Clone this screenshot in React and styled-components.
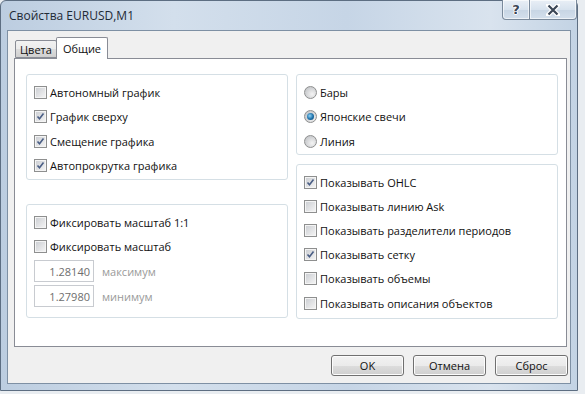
import React from "react";
import styled, { createGlobalStyle } from "styled-components";

const GlobalStyle = createGlobalStyle`
  html, body {
    margin: 0;
    padding: 0;
    background: #e9edf1;
  }
  body {
    font-family: "Open Sans", "Liberation Sans", Arial, sans-serif;
    font-size: 11px;
    color: #111;
  }
`;

const Window = styled.div`
  box-sizing: border-box;
  width: 578px;
  height: 391px;
  display: flex;
  flex-direction: column;
  padding: 0 6px 6px 6px;
  border: 1px solid #5d6e82;
  border-radius: 6px 6px 0 0;
  background: linear-gradient(90deg, #bccde0 0%, #d3dfec 30%, #c6d5e6 60%, #d9e3ee 85%, #c3d3e4 100%);
`;

const TitleBar = styled.div`
  height: 29px;
  display: flex;
  align-items: flex-start;
  justify-content: space-between;
  margin-right: -6px;
`;

const Title = styled.span`
  font-size: 12px;
  line-height: 12px;
  margin-top: 9px;
  margin-left: 2px;
  color: #1e2a36;
`;

const CaptionButtons = styled.div`
  display: flex;
  margin-top: -1px;
`;

const CaptionButton = styled.div`
  box-sizing: border-box;
  width: ${(p) => p.w}px;
  height: 20px;
  display: flex;
  align-items: center;
  justify-content: center;
  border: 1px solid #7a8a9c;
  border-top: none;
  border-left: ${(p) => (p.first ? "1px solid #7a8a9c" : "none")};
  border-radius: ${(p) => (p.first ? "0 0 0 4px" : "0 0 4px 0")};
  background: linear-gradient(180deg, #e9eff6 0%, #d7e2ee 50%, #c7d5e4 51%, #d3dfec 100%);
  box-shadow: inset 0 0 0 1px rgba(255, 255, 255, 0.6);
`;

const HelpGlyph = styled.span`
  font-family: "DejaVu Sans", sans-serif;
  font-weight: bold;
  font-size: 13px;
  color: #3b4656;
  text-shadow: 0 0 1px #fff, 1px 0 0 #fff, -1px 0 0 #fff, 0 1px 0 #fff;
`;

const Client = styled.div`
  flex: 1;
  display: flex;
  flex-direction: column;
  background: #f0f0f0;
  border: 1px solid #7e90a4;
  padding: 6px 2px 0 6px;
`;

const TabStrip = styled.div`
  display: flex;
  align-items: flex-end;
  height: 21px;
  padding-left: 1px;
  position: relative;
  z-index: 1;
`;

const Tab = styled.div`
  box-sizing: border-box;
  height: ${(p) => (p.active ? 22 : 18)}px;
  padding: 0 ${(p) => (p.active ? 6 : 4)}px;
  margin-left: ${(p) => (p.active ? -1 : 0)}px;
  display: flex;
  align-items: center;
  border: 1px solid #898c95;
  border-bottom: ${(p) => (p.active ? "none" : "1px solid #898c95")};
  border-radius: 2px 2px 0 0;
  background: ${(p) =>
    p.active ? "#fff" : "linear-gradient(180deg, #f2f2f2 0%, #ebebeb 50%, #dddddd 51%, #cfcfcf 100%)"};
  margin-bottom: ${(p) => (p.active ? -1 : 0)}px;
`;

const Panel = styled.div`
  box-sizing: border-box;
  height: 289px;
  margin-right: 1px;
  background: #fff;
  border: 1px solid #898c95;
  padding: 15px 8px 0 11px;
  display: grid;
  grid-template-columns: 262px 262px;
  column-gap: 8px;
  align-items: start;
`;

const Column = styled.div`
  display: flex;
  flex-direction: column;
  gap: ${(p) => p.gap}px;
`;

const Group = styled.div`
  box-sizing: border-box;
  height: ${(p) => p.h}px;
  border: 1px solid #d5dfe5;
  border-radius: 3px;
  padding: ${(p) => p.pt}px 6px 0 7px;
`;

const Row = styled.div`
  display: flex;
  align-items: center;
  height: ${(p) => p.h || 24}px;
  gap: 3px;
  white-space: nowrap;
`;

const Box = styled.span`
  box-sizing: border-box;
  width: 13px;
  height: 13px;
  flex: none;
  display: flex;
  align-items: center;
  justify-content: center;
  border: 1px solid #8e8f8f;
  background: linear-gradient(135deg, #c9ccd1 0%, #e2e3e5 55%, #f6f6f6 100%);
  box-shadow: inset 0 0 0 1px #f4f4f4;
`;

const Radio = styled.span`
  box-sizing: border-box;
  width: 13px;
  height: 13px;
  flex: none;
  border-radius: 50%;
  border: 1px solid #8e8f8f;
  background: radial-gradient(circle at 65% 65%, #f4f4f4 0%, #d6d7d9 50%, #b9bcc0 100%);
  display: flex;
  align-items: center;
  justify-content: center;
  &::after {
    content: "";
    display: ${(p) => (p.checked ? "block" : "none")};
    width: 7px;
    height: 7px;
    border-radius: 50%;
    background: radial-gradient(circle at 40% 40%, #8fd3f7 0%, #1c6fa8 55%, #0b3f6b 100%);
  }
`;

const NumInput = styled.div`
  box-sizing: border-box;
  width: 60px;
  height: 22px;
  border: 1px solid #c8cbd0;
  background: #fff;
  color: #6d6d6d;
  display: flex;
  align-items: center;
  justify-content: flex-end;
  padding-right: 3px;
`;

const Dim = styled.span`
  color: #9a9a9a;
  margin-left: 5px;
`;

const Footer = styled.div`
  display: flex;
  justify-content: flex-end;
  gap: 9px;
  margin-top: 8px;
`;

const Button = styled.div`
  box-sizing: border-box;
  width: 73px;
  height: 21px;
  display: flex;
  align-items: center;
  justify-content: center;
  border: 1px solid #707070;
  border-radius: 3px;
  background: linear-gradient(180deg, #f2f2f2 0%, #ebebeb 50%, #dddddd 51%, #cfcfcf 100%);
  box-shadow: inset 0 0 0 1px #fcfcfc;
`;

const Check = ({ on }) => (
  <Box>
    {on && (
      <svg width="9" height="9" viewBox="0 0 9 9">
        <path d="M1.5 4.5 L3.5 6.8 L7.5 1.5" fill="none" stroke="#4a5e85" strokeWidth="1.6" />
      </svg>
    )}
  </Box>
);

const CheckRow = ({ on, label, h }) => (
  <Row h={h}>
    <Check on={on} />
    <span>{label}</span>
  </Row>
);

const CloseGlyph = () => (
  <svg width="14" height="12" viewBox="0 0 14 12">
    <path d="M2 1 L12 11 M12 1 L2 11" stroke="#fff" strokeWidth="4.5" strokeLinecap="round" />
    <path d="M2.5 1.5 L11.5 10.5 M11.5 1.5 L2.5 10.5" stroke="#3b4656" strokeWidth="2.2" />
  </svg>
);

export default function App() {
  return (
    <>
      <GlobalStyle />
      <Window>
        <TitleBar>
          <Title>Свойства EURUSD,M1</Title>
          <CaptionButtons>
            <CaptionButton w={28} first>
              <HelpGlyph>?</HelpGlyph>
            </CaptionButton>
            <CaptionButton w={47}>
              <CloseGlyph />
            </CaptionButton>
          </CaptionButtons>
        </TitleBar>
        <Client>
          <TabStrip>
            <Tab>Цвета</Tab>
            <Tab active>Общие</Tab>
          </TabStrip>
          <Panel>
            <Column gap={24}>
              <Group h={106} pt={5}>
                <CheckRow h={24.5} label="Автономный график" />
                <CheckRow h={24.5} on label="График сверху" />
                <CheckRow h={24.5} on label="Смещение графика" />
                <CheckRow h={24.5} on label="Автопрокрутка графика" />
              </Group>
              <Group h={114} pt={5}>
                <CheckRow label="Фиксировать масштаб 1:1" />
                <CheckRow label="Фиксировать масштаб" />
                <Row h={26}>
                  <NumInput>1.28140</NumInput>
                  <Dim>максимум</Dim>
                </Row>
                <Row h={24}>
                  <NumInput>1.27980</NumInput>
                  <Dim>минимум</Dim>
                </Row>
              </Group>
            </Column>
            <Column gap={9}>
              <Group h={81} pt={5}>
                <Row h={24.5}>
                  <Radio />
                  <span>Бары</span>
                </Row>
                <Row h={24.5}>
                  <Radio checked />
                  <span>Японские свечи</span>
                </Row>
                <Row h={24.5}>
                  <Radio />
                  <span>Линия</span>
                </Row>
              </Group>
              <Group h={155} pt={5}>
                <CheckRow h={24.2} on label="Показывать OHLC" />
                <CheckRow h={24.2} label="Показывать линию Ask" />
                <CheckRow h={24.2} label="Показывать разделители периодов" />
                <CheckRow h={24.2} on label="Показывать сетку" />
                <CheckRow h={24.2} label="Показывать объемы" />
                <CheckRow h={24.2} label="Показывать описания объектов" />
              </Group>
            </Column>
          </Panel>
          <Footer>
            <Button>OK</Button>
            <Button>Отмена</Button>
            <Button>Сброс</Button>
          </Footer>
        </Client>
      </Window>
    </>
  );
}
